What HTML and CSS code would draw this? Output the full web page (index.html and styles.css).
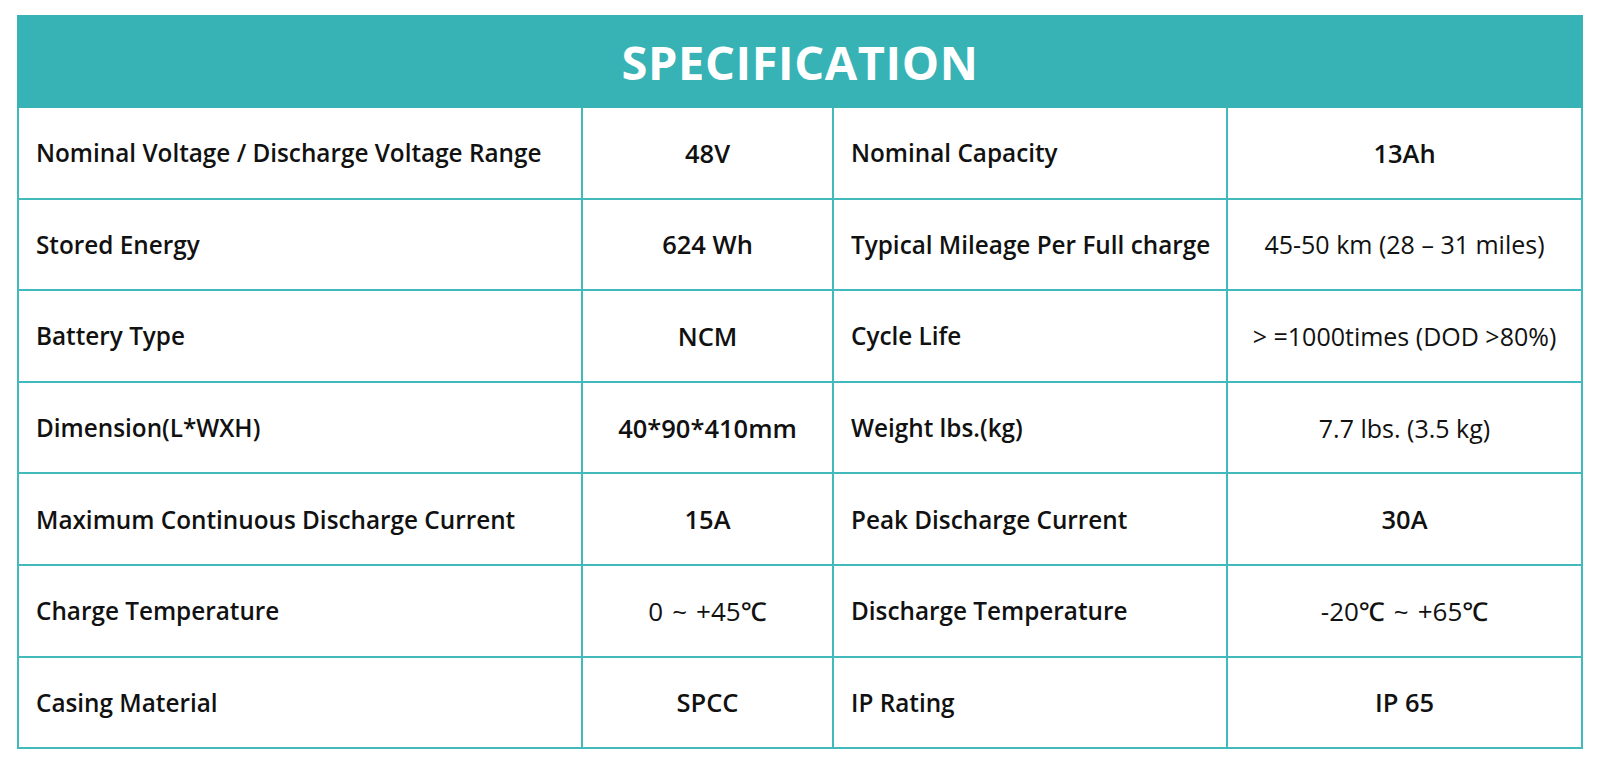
FILE: index.html
```html
<!DOCTYPE html>
<html lang="en">
<head>
<meta charset="utf-8">
<title>Specification</title>
<link rel="stylesheet" href="styles.css">
</head>
<body>
<div class="sheet">
  <div class="title">SPECIFICATION</div>
  <div class="grid">
    <div class="cell label">Nominal Voltage / Discharge Voltage Range</div>
    <div class="cell value">48V</div>
    <div class="cell label">Nominal Capacity</div>
    <div class="cell value">13Ah</div>

    <div class="cell label">Stored Energy</div>
    <div class="cell value">624 Wh</div>
    <div class="cell label">Typical Mileage Per Full charge</div>
    <div class="cell value light">45-50 km (28 – 31 miles)</div>

    <div class="cell label">Battery Type</div>
    <div class="cell value">NCM</div>
    <div class="cell label">Cycle Life</div>
    <div class="cell value light">&gt; =1000times (DOD &gt;80%)</div>

    <div class="cell label">Dimension(L*WXH)</div>
    <div class="cell value">40*90*410mm</div>
    <div class="cell label">Weight lbs.(kg)</div>
    <div class="cell value light">7.7 lbs. (3.5 kg)</div>

    <div class="cell label">Maximum Continuous Discharge Current</div>
    <div class="cell value">15A</div>
    <div class="cell label">Peak Discharge Current</div>
    <div class="cell value">30A</div>

    <div class="cell label">Charge Temperature</div>
    <div class="cell value medium">0<span class="sep">~</span>+45℃</div>
    <div class="cell label">Discharge Temperature</div>
    <div class="cell value medium">-20℃<span class="sep">~</span>+65℃</div>

    <div class="cell label">Casing Material</div>
    <div class="cell value">SPCC</div>
    <div class="cell label">IP Rating</div>
    <div class="cell value">IP 65</div>
  </div>
</div>
</body>
</html>
```

FILE: styles.css
```css
html, body {
  margin: 0;
  padding: 0;
  background: #ffffff;
}

body {
  font-family: "Open Sans", "Noto Sans", "DejaVu Sans", sans-serif;
  color: #111111;
}

.sheet {
  width: 1566px;
  margin: 15px 0 0 17px;
}

.title {
  height: 93px;
  background: #37b3b5;
  color: #ffffff;
  font-weight: 700;
  font-size: 47px;
  letter-spacing: 0.6px;
  display: flex;
  align-items: center;
  justify-content: center;
}

.grid {
  display: grid;
  grid-template-columns: 562px 249px 392px 353px;
  grid-auto-rows: 89.6px;
  gap: 2px;
  padding: 0 2px 2px 2px;
  background: #42b9bb;
}

.cell {
  background: #ffffff;
  display: flex;
  align-items: center;
  font-weight: 600;
  white-space: nowrap;
}

.label {
  padding-left: 17px;
  font-size: 24.3px;
}

.value {
  justify-content: center;
  font-size: 25.5px;
}

.value.light {
  font-weight: 400;
  font-size: 25px;
}

.value.medium {
  font-weight: 500;
  font-size: 26px;
}

.sep {
  margin: 0 9px;
}
```
